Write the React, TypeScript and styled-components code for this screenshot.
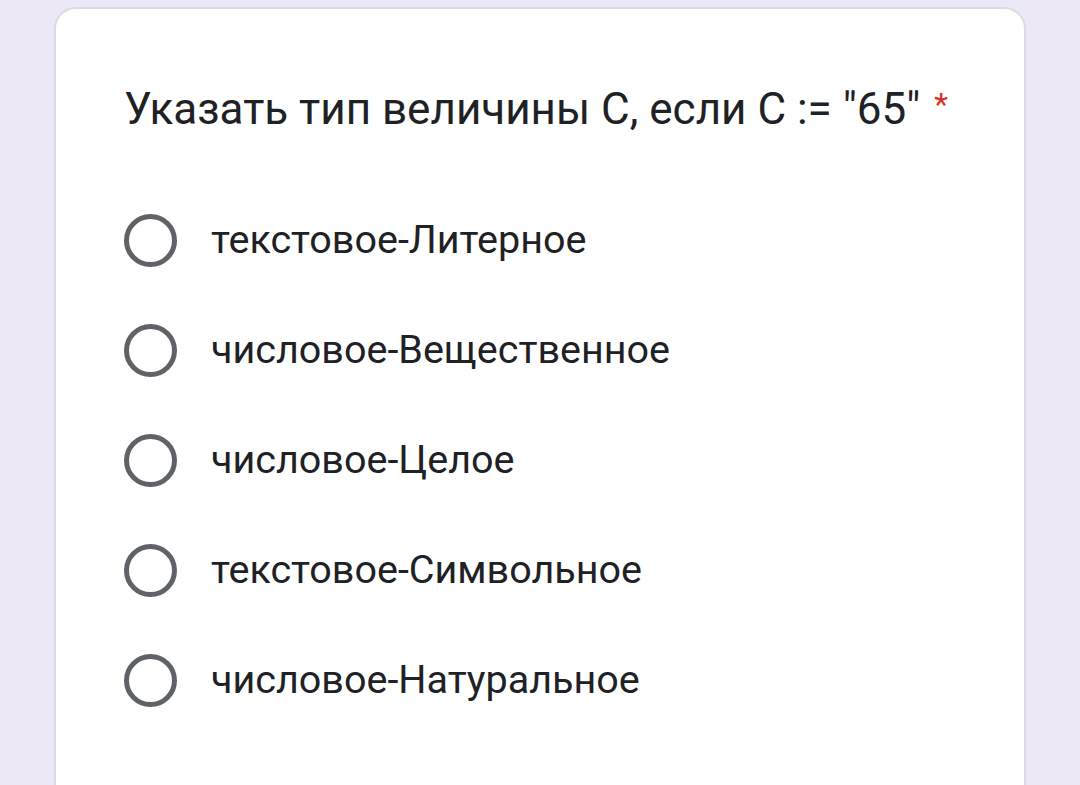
import React from "react";
import styled, { createGlobalStyle } from "styled-components";

const Global = createGlobalStyle`
  html, body { margin: 0; padding: 0; background: #ede8f6; }
  body { font-family: Roboto, "Noto Sans", sans-serif; }
`;

const Page = styled.div`
  width: 1080px;
  height: 785px;
  overflow: hidden;
  padding: 7px 0 0 54px;
  box-sizing: border-box;
`;

const Card = styled.div`
  width: 972px;
  height: 820px;
  box-sizing: border-box;
  background: #ffffff;
  border: 2px solid #dcdbe2;
  border-radius: 22px;
  padding: 69px 0 0 68px;
`;

const Title = styled.div`
  font-family: Roboto, "Noto Sans", sans-serif;
  font-size: 44px;
  line-height: 52px;
  color: #202124;
`;

const Star = styled.span`
  color: #d93025;
  font-size: 32px;
  margin-left: 14px;
  vertical-align: 9px;
`;

const Options = styled.div`
  display: flex;
  flex-direction: column;
  gap: 56px;
  margin-top: 78px;
`;

const Option = styled.label`
  display: flex;
  align-items: center;
  gap: 34px;
  height: 54px;
`;

const Radio = styled.span`
  width: 53px;
  height: 53px;
  box-sizing: border-box;
  border: 5px solid #5f6368;
  border-radius: 50%;
  flex: none;
`;

const OptionText = styled.span`
  font-size: 39.5px;
  line-height: 46px;
  color: #202124;
`;

const options = [
  "текстовое-Литерное",
  "числовое-Вещественное",
  "числовое-Целое",
  "текстовое-Символьное",
  "числовое-Натуральное",
];

export default function App() {
  return (
    <Page>
      <Global />
      <Card>
        <Title>
          Указать тип величины С, если С := "65"<Star>*</Star>
        </Title>
        <Options>
          {options.map((o) => (
            <Option key={o}>
              <Radio />
              <OptionText>{o}</OptionText>
            </Option>
          ))}
        </Options>
      </Card>
    </Page>
  );
}
